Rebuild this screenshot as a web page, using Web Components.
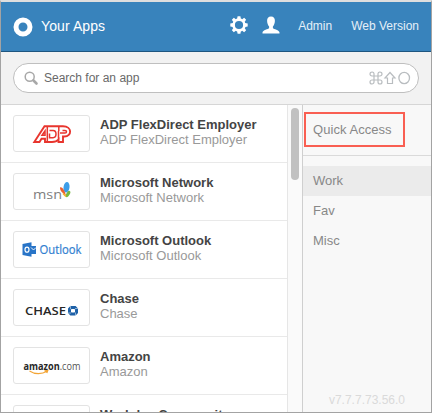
<!DOCTYPE html>
<html lang="en">
<head>
<meta charset="utf-8">
<title>Your Apps</title>
<style>
html,body{margin:0;height:413px;overflow:hidden;background:#a3a3a3;font-family:"Liberation Sans",Arial,sans-serif}
</style>
</head>
<body>
<app-window></app-window>
<script>
const define = (name, css, html) => customElements.define(name, class extends HTMLElement {
  constructor() {
    super();
    this.attachShadow({ mode: 'open' }).innerHTML = '<style>*{box-sizing:border-box}' + css + '</style>' + html;
  }
});

define('app-header', `
  :host{display:flex;align-items:center;box-sizing:border-box;height:50px;padding:0 12px;background:#3883bc;border-bottom:1px solid #1f5680;color:#fff}
  svg{display:block;flex:none}
  .title{font-size:14px;margin:-2px 0 0 8px;letter-spacing:.1px;flex:1;white-space:nowrap}
  .gear{margin:-3px 14px 0 0}
  .user{margin:-3px 18px 0 0}
  a{font-size:12px;color:#e4eff8;white-space:nowrap;margin-top:-2px}
  a+a{margin-left:19px}
`, `
  <svg width="20" height="20" viewBox="0 0 20 20"><circle cx="10" cy="10" r="7" fill="none" stroke="#fff" stroke-width="5"/></svg>
  <span class="title">Your Apps</span>
  <svg class="gear" width="18" height="18" viewBox="-9 -9 18 18"><circle r="5.400" fill="none" stroke="#fff" stroke-width="2.600"/>
    <g fill="#fff"><path id="t" d="M-1.900-6-1.400-8.700H1.400L1.900-6Z"/><use href="#t" transform="rotate(45)"/><use href="#t" transform="rotate(90)"/><use href="#t" transform="rotate(135)"/><use href="#t" transform="rotate(180)"/><use href="#t" transform="rotate(225)"/><use href="#t" transform="rotate(270)"/><use href="#t" transform="rotate(315)"/></g></svg>
  <svg class="user" width="18" height="18" viewBox="0 0 18 18"><path fill="#fff" d="M9 .5c2.700 0 3.900 1.800 3.900 4.300 0 2.500-.9 4.500-2 5.700v1.500c.5 1.300 6.600 2 6.600 4.500V17.500H.5V16.500c0-2.500 6.100-3.200 6.600-4.500v-1.500C6 9.300 5.100 7.300 5.100 4.800 5.100 2.300 6.300.5 9 .5Z"/></svg>
  <a>Admin</a><a>Web Version</a>
`);

define('app-search', `
  :host{display:block;box-sizing:border-box;height:53px;padding:11px 12px;background:#f2f2f2;border-bottom:1px solid #d6d6d6}
  .pill{display:flex;align-items:center;height:30px;border:1px solid #bfbfbf;border-radius:15px;background:#fff;padding:0 7px 0 10px}
  .text{flex:1;margin-left:5px;font-size:12px;color:#696969}
  svg{display:block;flex:none}
`, `
  <div class="pill">
    <svg width="15" height="15" viewBox="0 0 15 15" fill="none" stroke="#a8a8a8"><circle cx="5.700" cy="5.700" r="4.500" stroke-width="1.500"/><path d="M9.500 9.500 12.500 12.500" stroke-width="2.600" stroke-linecap="round"/></svg>
    <span class="text">Search for an app</span>
    <svg width="42" height="14" viewBox="0 0 42 14" fill="none" stroke="#b9bdc0" stroke-width="1.200">
      <path d="M5 5V3.200A2 2 0 1 0 3 5H11A2 2 0 1 0 9 3.200V11A2 2 0 1 0 11 9H3A2 2 0 1 0 5 11Z"/>
      <path d="M21 1.500 26 7H23.500V12.500H18.500V7H16Z"/>
      <ellipse cx="35.200" cy="7" rx="5.300" ry="5.600" stroke-width="1.300"/></svg>
  </div>
`);

define('app-item', `
  :host{display:flex;box-sizing:border-box;height:58px;flex:none;padding:10px 0 0 12px;border-bottom:1px solid #e9e9e9}
  .logo{width:77px;height:37px;flex:none;border:1px solid #e3e3e3;border-radius:3px;background:#fff}
  .info{margin:2px 0 0 10px;font-size:13px;line-height:15px;color:#999;white-space:nowrap}
  b{display:block;color:#444}
`, `<div class="logo"><slot name="logo"></slot></div><div class="info"><b><slot name="name"></slot></b><slot></slot></div>`);

define('app-list', `
  :host{display:flex;flex-direction:column;width:286px;flex:none;overflow:hidden;background:#fff}
  svg{display:block;font-family:"Open Sans","Noto Sans",sans-serif}
`, `
  <app-item>
    <svg slot="logo" width="75" height="35" viewBox="14 116 75 35" fill="none" stroke-linejoin="miter">
      <path d="M34.300 142 44.500 126.300H63C72.500 126.300 72 136.500 64.500 136.500H63V142H58.500V139.500C57 141.300 55 142 52 142H45V138.800H41.500L39.500 142Z" fill="#fff" stroke="#e8352e" stroke-width="1.900"/>
      <path d="M42 135.300H45V131Z M49.500 130.500H53C57 130.500 57 137.700 53 137.700H49.500V133.500 M47.300 127V141.500 M58.800 127V131 M58.500 131V139.500 M62.500 130.500H65C67 130.500 67 133 65 133H60" stroke="#e8352e" stroke-width="1.500"/>
    </svg>
    <span slot="name">ADP FlexDirect Employer</span>ADP FlexDirect Employer
  </app-item>
  <app-item>
    <svg slot="logo" width="75" height="35" viewBox="14 174 75 35">
      <text x="33" y="199" font-size="13" fill="#808080" textLength="29" lengthAdjust="spacingAndGlyphs">msn</text>
      <ellipse cx="66.500" cy="187.300" rx="3" ry="5.300" transform="rotate(8 66.500 187.300)" fill="#3d9ee8"/>
      <ellipse cx="68" cy="194" rx="1.700" ry="3.500" transform="rotate(30 68 194)" fill="#76b843"/>
      <path d="M60 187.500C62 186.500 64.500 190 66 195.500 62.500 193 60 191 60 187.500Z" fill="#eb6130"/><path d="M63 193.500 66 196.500" stroke="#f5ae25" stroke-width="1.500"/>
    </svg>
    <span slot="name">Microsoft Network</span>Microsoft Network
  </app-item>
  <app-item>
    <svg slot="logo" width="75" height="35" viewBox="14 232 75 35">
      <path d="M22.500 244 31.500 242.300V256.700L22.500 255Z" fill="#2874c7"/><path d="M31 246H36V254H31Z" fill="#2874c7"/><path d="M31 247.500 33.500 250 36 247.500" fill="none" stroke="#fff" stroke-width=".9"/><ellipse cx="27" cy="249.700" rx="2" ry="2.500" fill="none" stroke="#fff" stroke-width="1.200"/>
      <text x="39.500" y="254" font-size="12.500" fill="#2f7ed0" stroke="#2f7ed0" stroke-width=".2" textLength="42" lengthAdjust="spacingAndGlyphs">Outlook</text>
    </svg>
    <span slot="name">Microsoft Outlook</span>Microsoft Outlook
  </app-item>
  <app-item>
    <svg slot="logo" width="75" height="35" viewBox="14 290 75 35">
      <text x="25" y="314.500" font-size="10.500" font-weight="600" fill="#272727" textLength="41" lengthAdjust="spacingAndGlyphs">CHASE</text>
      <path d="M71 307.500H75L76.500 309V312.500L75 314H71L69.500 312.500V309Z" fill="none" stroke="#1e61a8" stroke-width="3"/><path d="M70.500 305.500V309M78.500 308.500H75M75.500 316V312.500M67.500 313H71" stroke="#d7e4f0" stroke-width=".6"/>
    </svg>
    <span slot="name">Chase</span>Chase
  </app-item>
  <app-item>
    <svg slot="logo" width="75" height="35" viewBox="14 348 75 35">
      <text x="23.500" y="370" font-size="11" font-weight="700" fill="#272727" textLength="57" lengthAdjust="spacingAndGlyphs">amazon<tspan font-weight="400" fill="#555">.com</tspan></text>
      <path d="M29.500 371C35 374.600 42 374.300 47 371.300M44.500 370.800 47.800 370.500 46.800 373" fill="none" stroke="#f3a536" stroke-width="1.200"/>
    </svg>
    <span slot="name">Amazon</span>Amazon
  </app-item>
  <app-item><span slot="name">Workday Community</span></app-item>
`);

define('scroll-track', `
  :host{display:block;box-sizing:border-box;width:16px;flex:none;padding:3px 3px 0;background:#fafafa;border-left:1px solid #e6e6e6;border-right:1px solid #cfcfcf}
  div{width:8px;height:72px;border-radius:4px;background:#c1c1c1}
`, `<div></div>`);

define('app-sidebar', `
  :host{display:flex;flex-direction:column;flex:1;min-width:0;background:#f8f8f8;color:#888;font-size:13px}
  .quick{height:51px;padding:7px 0 0 1px;border-bottom:1px solid #dadada;flex:none}
  .mark{width:101px;height:35px;border:2px solid #f95f52;padding-left:7px;line-height:32px;white-space:nowrap;letter-spacing:.05px}
  nav{margin-top:10px;flex:1}
  nav div{height:30px;line-height:30px;padding-left:10px}
  .on{background:#ebebeb}
  footer{font-size:12px;color:#dadada;text-align:right;padding-right:26px;line-height:14px;margin-bottom:5px}
`, `
  <div class="quick"><div class="mark">Quick Access</div></div>
  <nav><div class="on">Work</div><div>Fav</div><div>Misc</div></nav>
  <footer>v7.7.7.73.56.0</footer>
`);

define('app-window', `
  :host{display:flex;flex-direction:column;box-sizing:border-box;width:432px;height:413px;border:1px solid #a3a3a3;border-top:2px solid #dedede;overflow:hidden}
  main{display:flex;flex:1;min-height:0}
`, `<app-header></app-header><app-search></app-search><main><app-list></app-list><scroll-track></scroll-track><app-sidebar></app-sidebar></main>`);
</script>
</body>
</html>
